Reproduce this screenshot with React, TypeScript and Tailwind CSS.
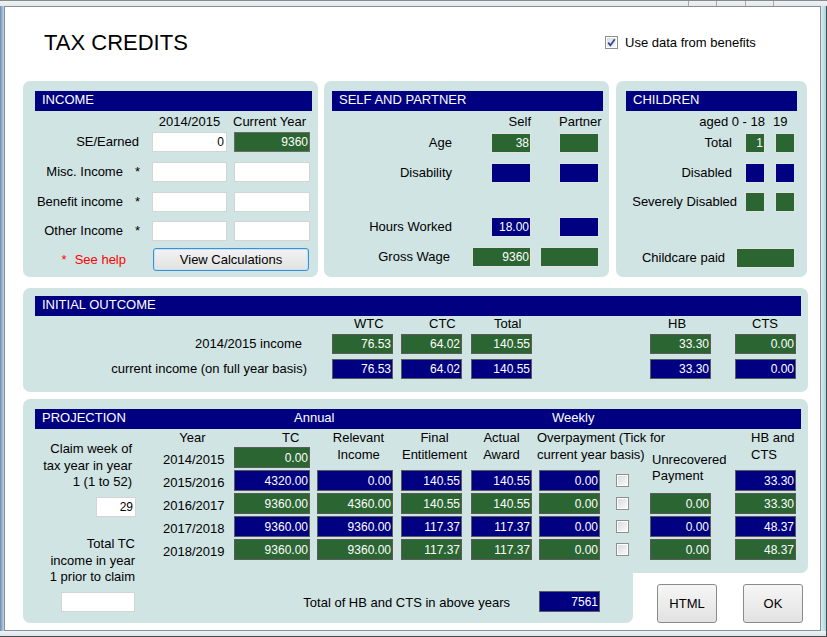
import React from "react";

type Tone = "g" | "n";

const BG: Record<Tone, string> = { g: "bg-[#2b6632]", n: "bg-[#000080]" };

function DBox({ tone, v = "", className = "" }: { tone: Tone; v?: string; className?: string }) {
  return (
    <div
      className={`${BG[tone]} ${className} flex shrink-0 items-center justify-end border border-[#5b5b5b] pr-[1px] text-[12px] leading-none text-white`}
    >
      {v}
    </div>
  );
}

function LBox({ tone, v = "", className = "" }: { tone: Tone; v?: string; className?: string }) {
  return (
    <div
      className={`${BG[tone]} ${className} flex shrink-0 items-center justify-end border border-[#e2e2e2] pr-[1px] text-[12px] leading-none text-white`}
    >
      {v}
    </div>
  );
}

function WBox({ v = "", className = "" }: { v?: string; className?: string }) {
  return (
    <div
      className={`${className} flex shrink-0 items-center justify-end border border-[#d4d4d4] bg-white pr-[2px] text-[12px] leading-none text-black`}
    >
      {v}
    </div>
  );
}

function Bar({ className = "", children }: { className?: string; children?: React.ReactNode }) {
  return (
    <div className={`${className} h-[20px] shrink-0 bg-[#000080] pl-[7px] text-[13px] leading-[17px] text-white`}>
      {children}
    </div>
  );
}

function Check({ checked = false }: { checked?: boolean }) {
  return (
    <div className="h-[13px] w-[13px] shrink-0 border border-[#8f8f8f] bg-white p-px">
      <div className="h-full w-full bg-gradient-to-br from-[#d9dde3] to-[#f7f8fa]">
        {checked && (
          <svg width="9" height="9" viewBox="0 0 9 9">
            <path d="M1.2 4.6 L3.4 7.3 L7.8 1.2" fill="none" stroke="#34468a" strokeWidth="1.7" />
          </svg>
        )}
      </div>
    </div>
  );
}

function PCol({
  className,
  headClass,
  head,
  cells,
}: {
  className: string;
  headClass: string;
  head: React.ReactNode;
  cells: [Tone, string][];
}) {
  return (
    <div className={`flex shrink-0 flex-col ${className}`}>
      <div className={headClass}>{head}</div>
      <div className="flex flex-col gap-[2px]">
        {cells.map(([t, v], i) => (
          <DBox key={i} tone={t} v={v} className="h-[21px] w-full" />
        ))}
      </div>
    </div>
  );
}

function Star({ label }: { label: string }) {
  return (
    <div className="flex w-[118px] shrink-0 justify-end pr-px">
      <span>{label}</span>
      <span className="ml-[12px]">*</span>
    </div>
  );
}

export default function App() {
  return (
    <div className="flex h-[637px] w-[827px] flex-col overflow-hidden bg-[#dde7ee] font-['Liberation_Sans',Arial,sans-serif] text-[13px] text-black">
      {/* top frame strip */}
      <div className="flex h-[6px] shrink-0 border-t border-[#8a8a8a] bg-gradient-to-b from-[#eef2f5] to-[#e2e9ee]">
        <div className="w-[688px]" />
        <div className="w-px bg-[#a9a9a9]" />
        <div className="w-[27px]" />
        <div className="w-px bg-[#a9a9a9]" />
        <div className="w-[28px]" />
        <div className="w-px bg-[#a9a9a9]" />
        <div className="w-[27px]" />
        <div className="w-px bg-[#a9a9a9]" />
      </div>

      <div className="flex h-[625px] shrink-0">
        <div className="w-[4px] bg-gradient-to-r from-[#6d8db6] to-[#c3d5e8]" />

        <div className="flex h-[625px] w-[817px] flex-col border border-[#8e8e8e] bg-white">
          {/* title row */}
          <div className="flex h-[49px] shrink-0 pl-[39px] pt-[23px]">
            <div className="w-[561px] text-[22px] leading-[26px]">TAX CREDITS</div>
            <div className="mt-[6px] flex h-[13px] items-center">
              <Check checked />
              <span className="ml-[7px] leading-[16px]">Use data from benefits</span>
            </div>
          </div>

          {/* top panels */}
          <div className="ml-[18px] mt-[25px] flex h-[196px] shrink-0">
            {/* INCOME */}
            <div className="flex h-[196px] w-[295px] flex-col rounded-[7px] bg-[#d0e4e4] pt-[10px]">
              <Bar className="ml-[12px] w-[277px]">INCOME</Bar>
              <div className="mt-[3px] flex h-[16px] whitespace-nowrap leading-[16px]">
                <div className="w-[129px]" />
                <div className="w-[75px] text-center">2014/2015</div>
                <div className="ml-[6px]">Current Year</div>
              </div>
              <div className="mt-[2px] flex h-[20px] items-center">
                <div className="w-[118px] pr-[2px] text-right">SE/Earned</div>
                <WBox v="0" className="ml-[11px] h-[20px] w-[75px]" />
                <div className="ml-[7px] flex h-[20px] w-[76px] items-center justify-end border border-[#6b6b6b] bg-[#2b6632] pr-[1px] text-[12px] leading-none text-white">
                  9360
                </div>
              </div>
              <div className="mt-[10px] flex h-[20px] items-center">
                <Star label="Misc. Income" />
                <WBox className="ml-[11px] h-[20px] w-[75px]" />
                <WBox className="ml-[7px] h-[20px] w-[76px]" />
              </div>
              <div className="mt-[10px] flex h-[20px] items-center">
                <Star label="Benefit income" />
                <WBox className="ml-[11px] h-[20px] w-[75px]" />
                <WBox className="ml-[7px] h-[20px] w-[76px]" />
              </div>
              <div className="mt-[9px] flex h-[20px] items-center">
                <Star label="Other Income" />
                <WBox className="ml-[11px] h-[20px] w-[75px]" />
                <WBox className="ml-[7px] h-[20px] w-[76px]" />
              </div>
              <div className="mt-[7px] flex h-[23px] items-center">
                <div className="w-[118px] pr-[15px] text-right text-[#ff0000]">
                  <span>*</span>
                  <span className="ml-[8px]">See help</span>
                </div>
                <button className="ml-[12px] h-[23px] w-[156px] rounded-[3px] border border-[#3c8fd0] bg-gradient-to-b from-[#f3f3f3] to-[#e1e1e1] text-[13px] leading-none text-black shadow-[inset_0_0_0_1px_#bfe3fa]">
                  View Calculations
                </button>
              </div>
            </div>

            {/* SELF AND PARTNER */}
            <div className="ml-[6px] flex h-[196px] w-[285px] flex-col rounded-[7px] bg-[#d0e4e4] pt-[10px]">
              <Bar className="ml-[8px] w-[271px]">SELF AND PARTNER</Bar>
              <div className="mt-[3px] flex h-[16px] leading-[16px]">
                <div className="w-[207px] text-right">Self</div>
                <div className="ml-[28px]">Partner</div>
              </div>
              <div className="mt-[3px] flex h-[20px] items-center">
                <div className="w-[128px] text-right">Age</div>
                <LBox tone="g" v="38" className="ml-[39px] h-[20px] w-[40px]" />
                <LBox tone="g" className="ml-[28px] h-[20px] w-[40px]" />
              </div>
              <div className="mt-[10px] flex h-[20px] items-center">
                <div className="w-[128px] text-right">Disability</div>
                <LBox tone="n" className="ml-[39px] h-[20px] w-[40px]" />
                <LBox tone="n" className="ml-[28px] h-[20px] w-[40px]" />
              </div>
              <div className="mt-[34px] flex h-[20px] items-center">
                <div className="w-[128px] text-right">Hours Worked</div>
                <LBox tone="n" v="18.00" className="ml-[39px] h-[20px] w-[40px]" />
                <LBox tone="n" className="ml-[28px] h-[20px] w-[40px]" />
              </div>
              <div className="mt-[10px] flex h-[20px] items-center">
                <div className="w-[126px] text-right">Gross Wage</div>
                <LBox tone="g" v="9360" className="ml-[22px] h-[20px] w-[59px]" />
                <LBox tone="g" className="ml-[9px] h-[20px] w-[59px]" />
              </div>
            </div>

            {/* CHILDREN */}
            <div className="ml-[7px] flex h-[196px] w-[191px] flex-col rounded-[7px] bg-[#d0e4e4] pt-[10px]">
              <Bar className="ml-[10px] w-[171px]">CHILDREN</Bar>
              <div className="mt-[3px] flex h-[16px] leading-[16px]">
                <div className="w-[149px] text-right">aged 0 - 18</div>
                <div className="ml-[8px]">19</div>
              </div>
              <div className="mt-[3px] flex h-[20px] items-center">
                <div className="w-[116px] text-right">Total</div>
                <LBox tone="g" v="1" className="ml-[13px] h-[20px] w-[20px]" />
                <LBox tone="g" className="ml-[10px] h-[20px] w-[20px]" />
              </div>
              <div className="mt-[10px] flex h-[20px] items-center">
                <div className="w-[116px] text-right">Disabled</div>
                <LBox tone="n" className="ml-[13px] h-[20px] w-[20px]" />
                <LBox tone="n" className="ml-[10px] h-[20px] w-[20px]" />
              </div>
              <div className="mt-[9px] flex h-[20px] items-center">
                <div className="w-[121px] whitespace-nowrap text-right">Severely Disabled</div>
                <LBox tone="g" className="ml-[8px] h-[20px] w-[20px]" />
                <LBox tone="g" className="ml-[10px] h-[20px] w-[20px]" />
              </div>
              <div className="mt-[36px] flex h-[20px] items-center">
                <div className="w-[109px] whitespace-nowrap text-right">Childcare paid</div>
                <LBox tone="g" className="ml-[11px] h-[20px] w-[59px]" />
              </div>
            </div>
          </div>

          {/* INITIAL OUTCOME */}
          <div className="ml-[18px] mt-[11px] flex h-[104px] w-[785px] shrink-0 flex-col rounded-[7px] bg-[#d0e4e4] pt-[8px]">
            <Bar className="ml-[12px] w-[766px]">INITIAL OUTCOME</Bar>
            <div className="flex leading-[16px]">
              <div className="w-[309px]" />
              <div className="w-[61px] pl-[22px]">WTC</div>
              <div className="ml-[8px] w-[61px] pl-[28px]">CTC</div>
              <div className="ml-[9px] w-[61px] pl-[23px]">Total</div>
              <div className="ml-[118px] w-[61px] pl-[18px]">HB</div>
              <div className="ml-[24px] w-[61px] pl-[17px]">CTS</div>
            </div>
            <div className="mt-[2px] flex h-[20px] items-center">
              <div className="w-[284px] pr-[5px] text-right">2014/2015 income</div>
              <DBox tone="g" v="76.53" className="ml-[25px] h-[20px] w-[61px]" />
              <DBox tone="g" v="64.02" className="ml-[8px] h-[20px] w-[61px]" />
              <DBox tone="g" v="140.55" className="ml-[9px] h-[20px] w-[61px]" />
              <DBox tone="g" v="33.30" className="ml-[118px] h-[20px] w-[61px]" />
              <DBox tone="g" v="0.00" className="ml-[24px] h-[20px] w-[61px]" />
            </div>
            <div className="mt-[5px] flex h-[20px] items-center">
              <div className="w-[284px] text-right">current income (on full year basis)</div>
              <DBox tone="n" v="76.53" className="ml-[25px] h-[20px] w-[61px]" />
              <DBox tone="n" v="64.02" className="ml-[8px] h-[20px] w-[61px]" />
              <DBox tone="n" v="140.55" className="ml-[9px] h-[20px] w-[61px]" />
              <DBox tone="n" v="33.30" className="ml-[118px] h-[20px] w-[61px]" />
              <DBox tone="n" v="0.00" className="ml-[24px] h-[20px] w-[61px]" />
            </div>
          </div>

          {/* PROJECTION */}
          <div className="ml-[18px] mt-[7px] flex w-[785px] shrink-0 flex-col">
            <div className="relative z-[1] flex h-[174px] flex-col rounded-t-[7px] rounded-br-[7px] bg-[#d0e4e4] pt-[10px]">
              <div className="ml-[12px] flex h-[20px] w-[766px] shrink-0 bg-[#000080] leading-[17px] text-white">
                <div className="w-[259px] pl-[7px]">PROJECTION</div>
                <div className="w-[258px]">Annual</div>
                <div>Weekly</div>
              </div>
              <div className="flex items-start">
                {/* left column */}
                <div className="flex w-[113px] shrink-0 flex-col items-end">
                  <div className="mt-[12px] pr-[4px] text-right leading-[16.5px]">
                    <div>Claim week of</div>
                    <div>tax year in year</div>
                    <div>1 (1 to 52)</div>
                  </div>
                  <WBox v="29" className="mt-[6.5px] h-[20px] w-[40px]" />
                  <div className="mt-[19px] whitespace-nowrap pr-px text-right leading-[16.5px]">
                    <div>Total TC</div>
                    <div>income in year</div>
                    <div>1 prior to claim</div>
                  </div>
                </div>
                {/* year column */}
                <div className="ml-[27px] flex w-[59px] shrink-0 flex-col text-center">
                  <div className="h-[17px] leading-[17px]">Year</div>
                  <div className="pt-[2px] leading-[23px]">
                    <div>2014/2015</div>
                    <div>2015/2016</div>
                    <div>2016/2017</div>
                    <div>2017/2018</div>
                    <div>2018/2019</div>
                  </div>
                </div>
                <PCol
                  className="ml-[12px] w-[76px]"
                  headClass="h-[18px] pl-[48px] leading-[17px]"
                  head="TC"
                  cells={[
                    ["g", "0.00"],
                    ["n", "4320.00"],
                    ["g", "9360.00"],
                    ["n", "9360.00"],
                    ["g", "9360.00"],
                  ]}
                />
                <PCol
                  className="ml-[7px] w-[76px]"
                  headClass="h-[41px] whitespace-nowrap pl-[7px] text-center leading-[17px]"
                  head={
                    <>
                      <div>Relevant</div>
                      <div>Income</div>
                    </>
                  }
                  cells={[
                    ["n", "0.00"],
                    ["g", "4360.00"],
                    ["n", "9360.00"],
                    ["g", "9360.00"],
                  ]}
                />
                <PCol
                  className="ml-[8px] w-[61px]"
                  headClass="h-[41px] w-[67px] whitespace-nowrap text-center leading-[17px]"
                  head={
                    <>
                      <div>Final</div>
                      <div>Entitlement</div>
                    </>
                  }
                  cells={[
                    ["n", "140.55"],
                    ["g", "140.55"],
                    ["n", "117.37"],
                    ["g", "117.37"],
                  ]}
                />
                <PCol
                  className="ml-[9px] w-[61px]"
                  headClass="h-[41px] whitespace-nowrap text-center leading-[17px]"
                  head={
                    <>
                      <div>Actual</div>
                      <div>Award</div>
                    </>
                  }
                  cells={[
                    ["n", "140.55"],
                    ["g", "140.55"],
                    ["n", "117.37"],
                    ["g", "117.37"],
                  ]}
                />
                <PCol
                  className="ml-[7px] w-[61px]"
                  headClass="-ml-[2px] h-[41px] whitespace-nowrap leading-[17px]"
                  head={
                    <>
                      <div>Overpayment (Tick for</div>
                      <div>current year basis)</div>
                    </>
                  }
                  cells={[
                    ["n", "0.00"],
                    ["g", "0.00"],
                    ["n", "0.00"],
                    ["g", "0.00"],
                  ]}
                />
                <div className="ml-[16px] flex w-[13px] shrink-0 flex-col">
                  <div className="h-[41px]" />
                  <div className="flex flex-col gap-[2px]">
                    {[0, 1, 2, 3].map((i) => (
                      <div key={i} className="flex h-[21px] items-center">
                        <Check />
                      </div>
                    ))}
                  </div>
                </div>
                <PCol
                  className="ml-[21px] w-[61px]"
                  headClass="h-[64px] whitespace-nowrap pl-[2px] pt-[23px] leading-[16px]"
                  head={
                    <>
                      <div>Unrecovered</div>
                      <div>Payment</div>
                    </>
                  }
                  cells={[
                    ["g", "0.00"],
                    ["n", "0.00"],
                    ["g", "0.00"],
                  ]}
                />
                <PCol
                  className="ml-[24px] w-[61px]"
                  headClass="h-[41px] whitespace-nowrap pl-[16px] leading-[17px]"
                  head={
                    <>
                      <div>HB and</div>
                      <div>CTS</div>
                    </>
                  }
                  cells={[
                    ["n", "33.30"],
                    ["g", "33.30"],
                    ["n", "48.37"],
                    ["g", "48.37"],
                  ]}
                />
              </div>
            </div>
            <div className="flex h-[50px]">
              <div className="flex w-[610px] items-start rounded-b-[7px] bg-[#d0e4e4]">
                <WBox className="ml-[38px] mt-[19px] h-[20px] w-[74px]" />
                <div className="mt-[22px] w-[375px] text-right leading-[16px]">Total of HB and CTS in above years</div>
                <DBox tone="n" v="7561" className="ml-[29px] mt-[18px] h-[21px] w-[61px]" />
              </div>
              <div className="flex flex-1 items-start">
                <button className="ml-[24px] mt-[11px] h-[39px] w-[60px] rounded-[3px] border border-[#8a8a8a] bg-gradient-to-b from-[#f6f6f6] to-[#e2e2e2] text-[13px] leading-none text-black">
                  HTML
                </button>
                <button className="ml-[26px] mt-[11px] h-[39px] w-[60px] rounded-[3px] border border-[#8a8a8a] bg-gradient-to-b from-[#f6f6f6] to-[#e2e2e2] text-[13px] leading-none text-black">
                  OK
                </button>
              </div>
            </div>
          </div>
        </div>

        <div className="w-[6px] border-r border-[#4d4d4d] bg-gradient-to-r from-[#d9eef3] to-[#a6d5df]" />
      </div>
      <div className="h-[6px] shrink-0 border-b border-r border-[#4d4d4d] bg-gradient-to-b from-[#eef3f6] to-[#dce6ec]" />
    </div>
  );
}
